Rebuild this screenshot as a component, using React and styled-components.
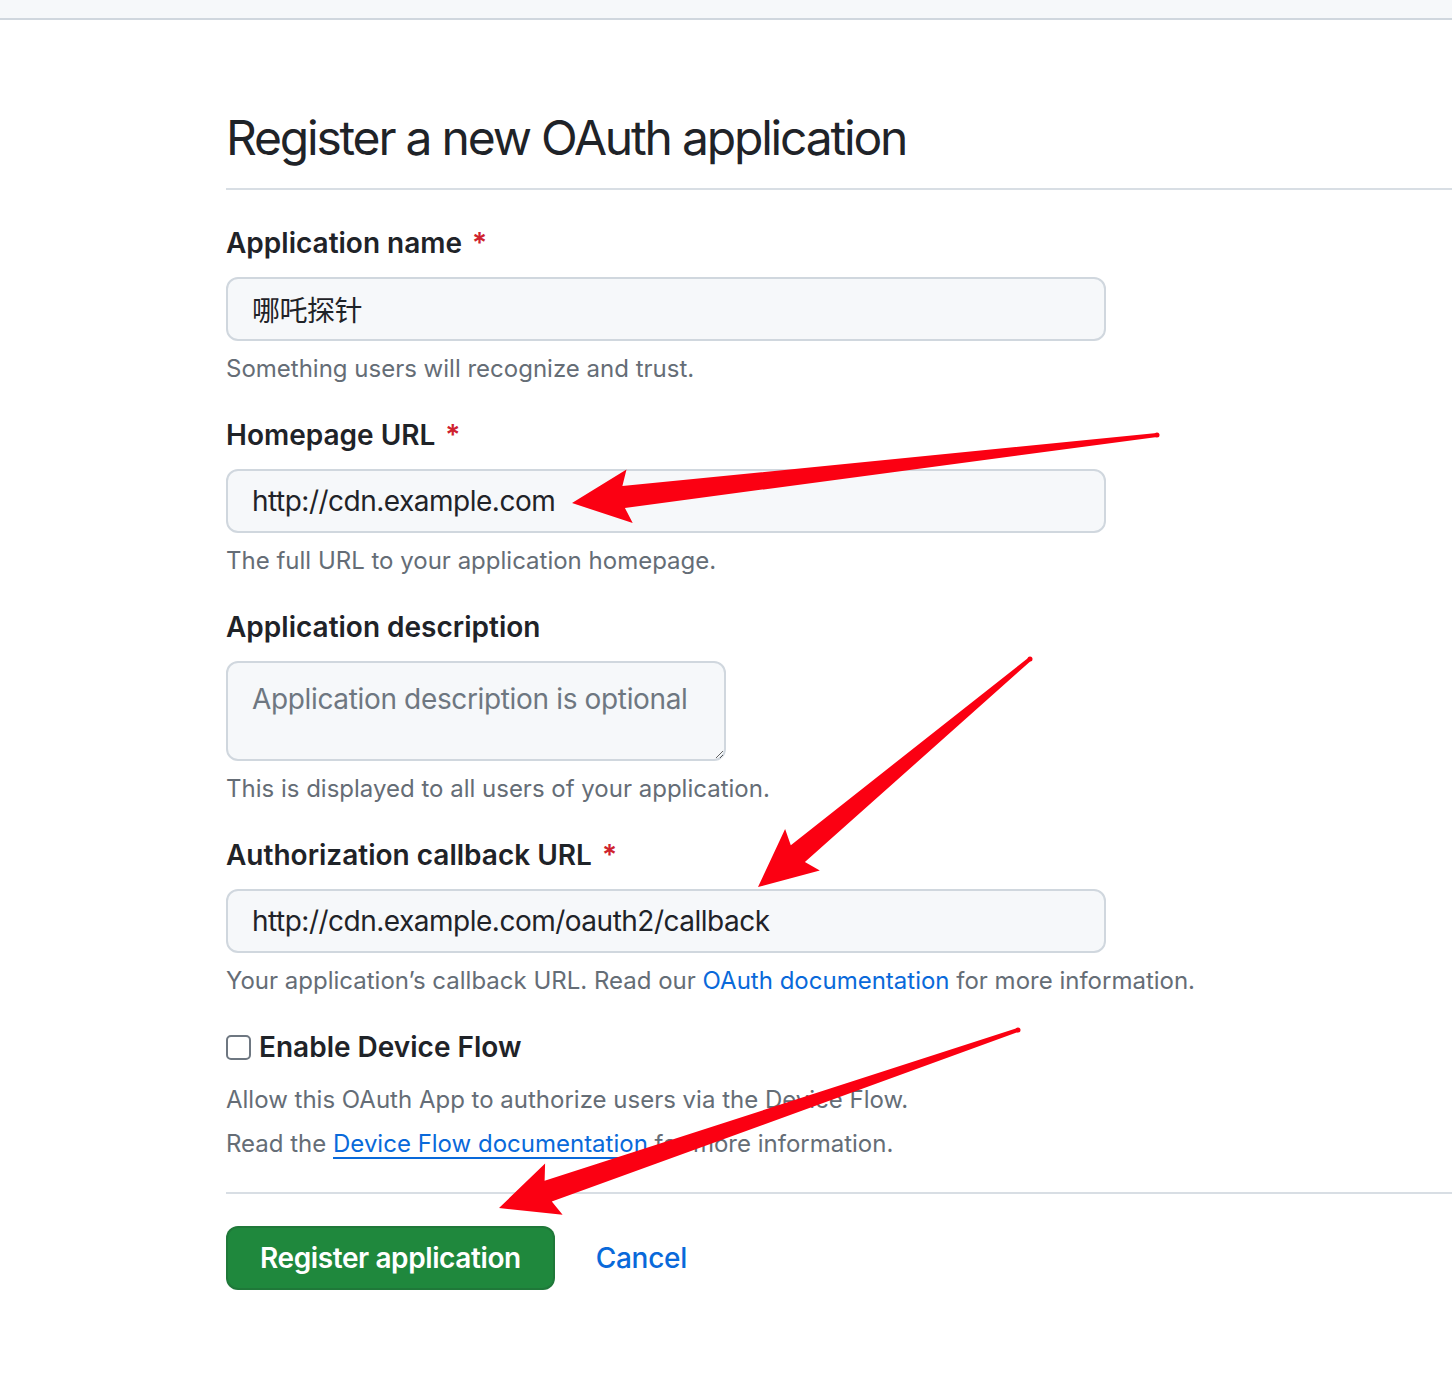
import React from "react";
import styled, { createGlobalStyle } from "styled-components";

const Global = createGlobalStyle`
  html, body { margin: 0; padding: 0; background: #ffffff; }
  body {
    font-family: Inter, "Noto Sans CJK SC", sans-serif;
    color: #1f2328;
  }
  * { box-sizing: border-box; }
`;

const Page = styled.div`
  position: relative;
  width: 1452px;
  min-height: 1388px;
  background: #ffffff;
  overflow: hidden;
`;

const TopBar = styled.div`
  height: 20px;
  background: #f6f8fa;
  border-bottom: 2px solid #d0d7de;
`;

const Main = styled.main`
  padding: 88px 0 0 226px;
`;

const Subhead = styled.div`
  border-bottom: 2px solid #d8dee4;
  padding-bottom: 20px;
`;

const Title = styled.h1`
  margin: 0;
  font-size: 48px;
  line-height: 60px;
  font-weight: 400;
  color: #1f2328;
  letter-spacing: -2.2px;
`;

const Form = styled.form`
  display: flex;
  flex-direction: column;
  padding-top: 32px;
  width: 1000px;
`;

const Group = styled.div`
  display: flex;
  flex-direction: column;
  margin-bottom: ${(p) => p.$mb ?? 27}px;
`;

const Label = styled.label`
  font-size: 28px;
  line-height: 42px;
  font-weight: 600;
  color: #1f2328;
  margin-bottom: 13px;
`;

const Req = styled.span`
  color: #cf222e;
  margin-left: 10px;
`;

const Input = styled.input`
  width: 880px;
  height: 64px;
  border: 2px solid #d0d7de;
  border-radius: 12px;
  background: #f6f8fa;
  padding: 0 24px;
  font-family: Inter, "Noto Sans CJK SC", sans-serif;
  font-size: 28px;
  letter-spacing: -0.5px;
  color: #1f2328;
  outline: none;
`;

const TextArea = styled.textarea`
  width: 500px;
  height: 100px;
  border: 2px solid #d0d7de;
  border-radius: 12px;
  background: #f6f8fa;
  padding: 16px 24px;
  font-family: Inter, sans-serif;
  font-size: 28px;
  line-height: 40px;
  letter-spacing: -0.35px;
  color: #1f2328;
  resize: vertical;
  outline: none;
  &::placeholder { color: #6e7781; }
`;

const Note = styled.p`
  margin: ${(p) => p.$mt ?? 10}px 0 0;
  font-size: 24px;
  line-height: 36px;
  color: #656d76;
`;

const Link = styled.a`
  color: #0969da;
  text-decoration: ${(p) => (p.$underline ? "underline" : "none")};
  text-underline-offset: 5px;
  text-decoration-thickness: 2px;
`;

const CheckRow = styled.label`
  display: flex;
  align-items: center;
  gap: 8px;
  font-size: 28px;
  line-height: 42px;
  font-weight: 600;
  color: #1f2328;
`;

const Box = styled.span`
  width: 25px;
  height: 25px;
  border: 2px solid #6e7781;
  border-radius: 5px;
  background: #fff;
  display: inline-block;
`;

const Divider = styled.hr`
  border: 0;
  border-top: 2px solid #d8dee4;
  margin: 30px 0 0 0;
  width: 1226px;
`;

const Actions = styled.div`
  display: flex;
  align-items: center;
  gap: 41px;
  padding-top: 32px;
`;

const Primary = styled.button`
  height: 64px;
  padding: 0 32px;
  border: 2px solid rgba(31, 35, 40, 0.15);
  border-radius: 12px;
  background: #1f883d;
  color: #ffffff;
  font-family: Inter, sans-serif;
  font-size: 28px;
  font-weight: 600;
  letter-spacing: -0.4px;
`;

const CancelLink = styled.a`
  color: #0969da;
  font-size: 28px;
  font-weight: 500;
  letter-spacing: -0.3px;
  text-decoration: none;
`;

const Overlay = styled.svg`
  position: absolute;
  left: 0;
  top: 0;
  pointer-events: none;
`;

function arrowPoints(tail, tip, L = 58, W = 27, notch = 11, tailW = 2) {
  const dx = tail[0] - tip[0];
  const dy = tail[1] - tip[1];
  const len = Math.hypot(dx, dy);
  const ux = dx / len, uy = dy / len;
  const px = -uy, py = ux;
  const pt = (a, b) => `${(tip[0] + ux * a + px * b).toFixed(1)},${(tip[1] + uy * a + py * b).toFixed(1)}`;
  const tl = (b) => `${(tail[0] + px * b).toFixed(1)},${(tail[1] + py * b).toFixed(1)}`;
  return [
    `${tip[0]},${tip[1]}`,
    pt(L, W),
    pt(L - 6, notch),
    tl(tailW),
    tl(-tailW),
    pt(L - 6, -notch),
    pt(L, -W),
  ].join(" ");
}

const arrows = [
  { tail: [1157, 435], tip: [572, 503] },
  { tail: [1030, 659], tip: [758, 887] },
  { tail: [1018, 1030], tip: [499, 1208] },
];

function Arrows() {
  return (
    <Overlay width="1452" height="1388" viewBox="0 0 1452 1388">
      {arrows.map((a, i) => (
        <g key={i} fill="#fb0012">
          <polygon points={arrowPoints(a.tail, a.tip)} />
          <circle cx={a.tail[0]} cy={a.tail[1]} r="2.5" />
        </g>
      ))}
    </Overlay>
  );
}

export default function App() {
  return (
    <Page>
      <Global />
      <TopBar />
      <Main>
        <Subhead>
          <Title>Register a new OAuth application</Title>
        </Subhead>
        <Form onSubmit={(e) => e.preventDefault()}>
          <Group>
            <Label>
              Application name<Req>*</Req>
            </Label>
            <Input defaultValue="哪吒探针" />
            <Note>Something users will recognize and trust.</Note>
          </Group>
          <Group>
            <Label>
              Homepage URL<Req>*</Req>
            </Label>
            <Input defaultValue="http://cdn.example.com" />
            <Note>The full URL to your application homepage.</Note>
          </Group>
          <Group>
            <Label>Application description</Label>
            <TextArea placeholder="Application description is optional" />
            <Note>This is displayed to all users of your application.</Note>
          </Group>
          <Group>
            <Label>
              Authorization callback URL<Req>*</Req>
            </Label>
            <Input defaultValue="http://cdn.example.com/oauth2/callback" />
            <Note>
              Your application’s callback URL. Read our{" "}
              <Link href="#">OAuth documentation</Link> for more information.
            </Note>
          </Group>
          <Group $mb={0}>
            <CheckRow>
              <Box />
              Enable Device Flow
            </CheckRow>
            <Note $mt={14}>Allow this OAuth App to authorize users via the Device Flow.</Note>
            <Note $mt={8}>
              Read the <Link href="#" $underline>Device Flow documentation</Link> for more information.
            </Note>
          </Group>
          <Divider />
          <Actions>
            <Primary type="submit">Register application</Primary>
            <CancelLink href="#">Cancel</CancelLink>
          </Actions>
        </Form>
      </Main>
      <Arrows />
    </Page>
  );
}
